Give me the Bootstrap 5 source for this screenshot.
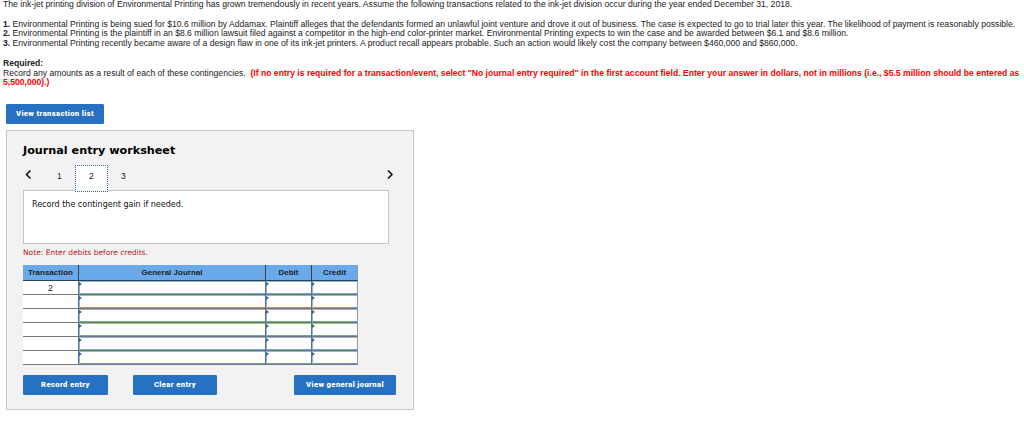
<!DOCTYPE html>
<html lang="en">
<head>
    <meta charset="UTF-8">
    <meta name="viewport" content="width=device-width, initial-scale=1.0">
    <title>Journal entry worksheet</title>
    <link href="https://cdn.jsdelivr.net/npm/bootstrap@5.3.0/dist/css/bootstrap.min.css" rel="stylesheet">
    <style>
        body {
            font-family: "Liberation Sans", Arial, sans-serif;
            font-size: 8.62px;
            line-height: 9.8px;
            color: #222;
            overflow: hidden;
        }
        .problem {
            padding: 0 0 0 3px;
            height: 104px;
        }
        .problem p {
            margin: 0 0 9.8px;
            white-space: nowrap;
        }
        .hint { color: #f00; }
        .btn-sheet {
            --bs-btn-color: #fff;
            --bs-btn-bg: #2671c1;
            --bs-btn-border-color: #2671c1;
            --bs-btn-padding-x: 0;
            --bs-btn-padding-y: 0;
            --bs-btn-border-radius: 1px;
            --bs-btn-font-size: 7.6px;
            --bs-btn-font-weight: 900;
            --bs-btn-line-height: 18px;
            font-family: Roboto, sans-serif;
            letter-spacing: .38px;
            height: 20px;
        }
        .w-list { width: 98px; margin-left: 6px; }
        .w-record { width: 85px; }
        .w-clear { width: 84px; margin-left: 25px; }
        .w-view { width: 102px; margin-left: 77px; }
        .sheet {
            width: 408px;
            height: 280px;
            margin: 6px 0 0 6px;
            padding: 13px 0 0 16px;
            background: #f2f2f2;
            border: 1px solid #c8c8c8;
            font-family: "DejaVu Sans", Verdana, sans-serif;
        }
        .sheet h1 {
            font-family: Verdana, "DejaVu Sans", sans-serif;
            font-size: 11.2px;
            line-height: 14px;
            font-weight: bold;
            color: #000;
            margin: 0 0 7px;
        }
        .steps {
            width: 372px;
            height: 25px;
            font-family: "Liberation Sans", Arial, sans-serif;
        }
        .step {
            width: 31px;
            height: 22px;
            text-align: center;
            line-height: 22px;
        }
        .step-on {
            width: 33px;
            height: 27px;
            line-height: 20px;
            background: #fff;
            border: 1px dotted #2e6ca8;
            z-index: 1;
        }
        .task {
            width: 366px;
            height: 54px;
            padding: 9px 8px;
            background: #fff;
            border: 1px solid #c4c4c4;
            font-size: 8px;
            color: #111;
        }
        .note {
            margin: 4px 0 7px;
            font-size: 7.5px;
            color: #b8121b;
        }
        .journal {
            width: 335px;
            table-layout: fixed;
            border-collapse: separate;
            border-spacing: 0;
            font-family: "Liberation Sans", Arial, sans-serif;
            font-size: 8px;
            line-height: 10px;
            text-align: center;
            margin-bottom: 10px;
        }
        .journal th {
            height: 16px;
            padding: 2px 0 0;
            background: #6aa9ea;
            border-right: 1px solid #2d4358;
            border-bottom: 1px solid #2d4358;
            text-align: center;
        }
        .journal td {
            height: 14px;
            padding: 0;
            background: #fff;
            border-bottom: 1px solid #777;
        }
        .journal td:first-child {
            padding-top: 1px;
            border-right: 1px solid #646e78;
            font-size: 8.62px;
        }
        .journal td.entry {
            border-right: 1px solid #646e78;
            box-shadow: inset 1px 1px #8fb5dd, inset 0 -1px #6f9fd2;
            vertical-align: top;
        }
        .journal tr > :last-child { border-right-color: #999; }
        .entry svg {
            display: block;
            width: 3px;
            height: 4px;
            margin-top: 1px;
        }
    </style>
</head>
<body>
    <div class="problem">
        <p>The ink-jet printing division of Environmental Printing has grown tremendously in recent years. Assume the following transactions related to the ink-jet division occur during the year ended December 31, 2018.</p>
        <p><b>1.</b> Environmental Printing is being sued for $10.6 million by Addamax. Plaintiff alleges that the defendants formed an unlawful joint venture and drove it out of business. The case is expected to go to trial later this year. The likelihood of payment is reasonably possible.<br>
        <b>2.</b> Environmental Printing is the plaintiff in an $8.6 million lawsuit filed against a competitor in the high-end color-printer market. Environmental Printing expects to win the case and be awarded between $6.1 and $8.6 million.<br>
        <b>3.</b> Environmental Printing recently became aware of a design flaw in one of its ink-jet printers. A product recall appears probable. Such an action would likely cost the company between $460,000 and $860,000.</p>
        <p><b>Required:</b><br>
        Record any amounts as a result of each of these contingencies. &nbsp;<b class="hint">(If no entry is required for a transaction/event, select "No journal entry required" in the first account field. Enter your answer in dollars, not in millions (i.e., $5.5 million should be entered as<br>5,500,000).)</b></p>
    </div>

    <button class="btn btn-sheet w-list d-block">View transaction list</button>

    <div class="sheet">
        <h1>Journal entry worksheet</h1>

        <!-- entry steps -->
        <div class="steps d-flex">
            <svg class="mt-1" width="9" height="11" viewBox="0 0 9 11" fill="none" stroke="#111" stroke-width="1.6"><path d="M7.5 1.5 3.5 5.5l4 4"/></svg>
            <div class="step ms-2 ps-2">1</div>
            <div class="step step-on position-relative ms-1">2</div>
            <div class="step">3</div>
            <svg class="mt-1 ms-auto" width="9" height="11" viewBox="0 0 9 11" fill="none" stroke="#111" stroke-width="1.6"><path d="m2 1.5 4 4-4 4"/></svg>
        </div>

        <div class="task">Record the contingent gain if needed.</div>
        <div class="note">Note: Enter debits before credits.</div>

        <table class="journal">
            <colgroup><col style="width:56px"><col style="width:187px"><col style="width:46px"><col style="width:46px"></colgroup>
            <thead>
                <tr><th>Transaction</th><th>General Journal</th><th>Debit</th><th>Credit</th></tr>
            </thead>
            <tbody id="rows"></tbody>
        </table>

        <div class="d-flex">
            <button class="btn btn-sheet w-record">Record entry</button>
            <button class="btn btn-sheet w-clear">Clear entry</button>
            <button class="btn btn-sheet w-view">View general journal</button>
        </div>
    </div>

    <script src="https://cdn.jsdelivr.net/npm/bootstrap@5.3.0/dist/js/bootstrap.bundle.min.js"></script>
    <script>
        const cell = '<td class="entry"><svg viewBox="0 0 3 4"><path d="M0 0l3 2-3 2z" fill="#1f6cbd"/></svg></td>';
        for (let i = 0; i < 6; i++) {
            document.getElementById('rows').insertAdjacentHTML('beforeend',
                '<tr><td>' + (i === 0 ? '2' : '') + '</td>' + cell.repeat(3) + '</tr>');
        }
    </script>
</body>
</html>
